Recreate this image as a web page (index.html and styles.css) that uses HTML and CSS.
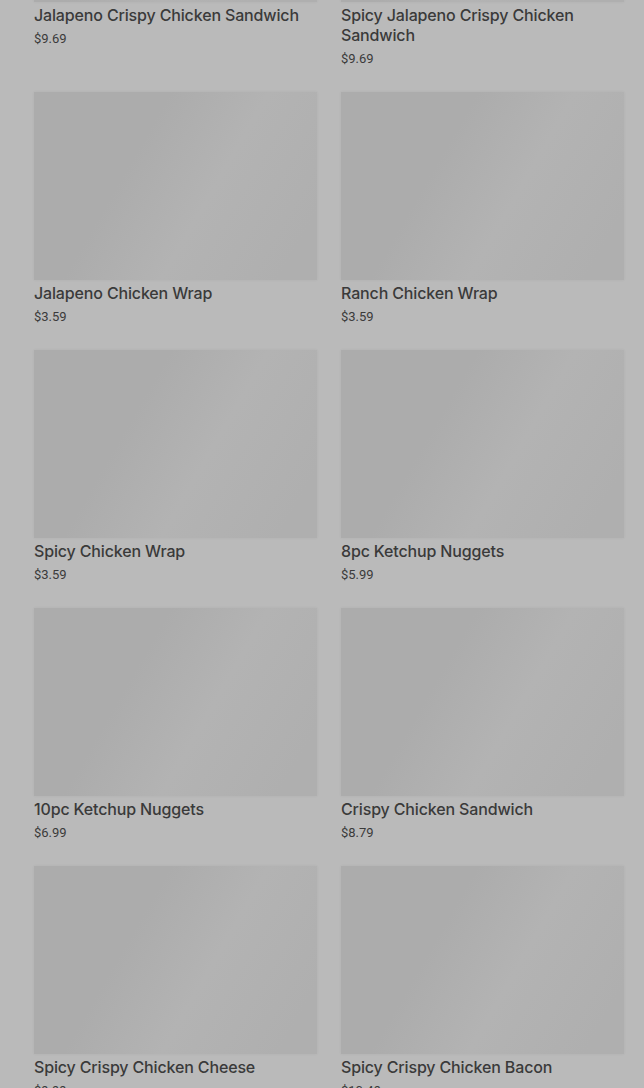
FILE: index.html
```html
<!doctype html>
<html lang="en">

<head>
  <meta charset="utf-8">
  <meta name="viewport" content="width=device-width, initial-scale=1.0">
  <title>Menu</title>
  <link rel="stylesheet" href="styles.css">
</head>

<body>
  <div class="menu">
    <div class="item">
      <div class="thumb"></div>
      <h3>Jalapeno Crispy Chicken Sandwich</h3>
      <p class="price">$9.69</p>
    </div>
    <div class="item">
      <div class="thumb"></div>
      <h3>Spicy Jalapeno Crispy Chicken Sandwich</h3>
      <p class="price">$9.69</p>
    </div>
    <div class="item">
      <div class="thumb"></div>
      <h3>Jalapeno Chicken Wrap</h3>
      <p class="price">$3.59</p>
    </div>
    <div class="item">
      <div class="thumb"></div>
      <h3>Ranch Chicken Wrap</h3>
      <p class="price">$3.59</p>
    </div>
    <div class="item">
      <div class="thumb"></div>
      <h3>Spicy Chicken Wrap</h3>
      <p class="price">$3.59</p>
    </div>
    <div class="item">
      <div class="thumb"></div>
      <h3>8pc Ketchup Nuggets</h3>
      <p class="price">$5.99</p>
    </div>
    <div class="item">
      <div class="thumb"></div>
      <h3>10pc Ketchup Nuggets</h3>
      <p class="price">$6.99</p>
    </div>
    <div class="item">
      <div class="thumb"></div>
      <h3>Crispy Chicken Sandwich</h3>
      <p class="price">$8.79</p>
    </div>
    <div class="item">
      <div class="thumb"></div>
      <h3>Spicy Crispy Chicken Cheese</h3>
      <p class="price">$9.99</p>
    </div>
    <div class="item">
      <div class="thumb"></div>
      <h3>Spicy Crispy Chicken Bacon</h3>
      <p class="price">$10.49</p>
    </div>
  </div>
</body>
</html>
```

FILE: styles.css
```css
html {
  font-family: Inter, Roboto, "Liberation Sans", sans-serif;
  background-color: #bababa;
}

body {
  margin: 0;
  overflow: hidden;
}

/* page is scrolled: the first row's picture sits above the top edge */
.menu {
  display: grid;
  grid-template-columns: 1fr 1fr;
  column-gap: 24px;
  row-gap: 24px;
  padding: 0 20px 0 34px;
  margin-top: -186px;
}

.item {
  display: flex;
  flex-direction: column;
}

.thumb {
  height: 188px;
  background: linear-gradient(120deg, #acacac 0%, #acacac 35%, #b3b3b3 60%, #afafaf 90%);
  box-shadow: 0 0 3px rgba(0, 0, 0, 0.06);
}

h3 {
  margin: 3px 0 0;
  font-size: 16px;
  font-weight: 500;
  letter-spacing: -0.15px;
  line-height: 20px;
  color: #3a3a3a;
}

.price {
  margin: 5px 0 0;
  font-family: Roboto, "Liberation Sans", sans-serif;
  font-size: 13px;
  line-height: 18px;
  color: #3a3a3a;
}
```
